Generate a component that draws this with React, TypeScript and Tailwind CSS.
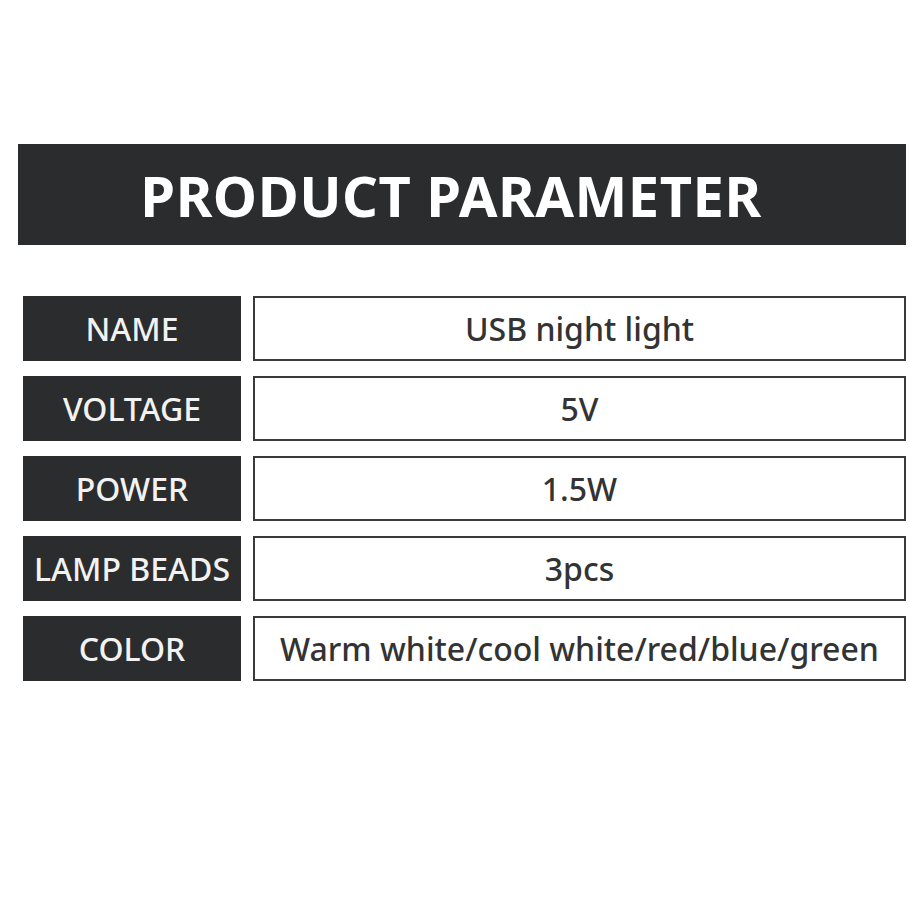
const rows = [
  { label: "NAME", value: "USB night light" },
  { label: "VOLTAGE", value: "5V" },
  { label: "POWER", value: "1.5W" },
  { label: "LAMP BEADS", value: "3pcs" },
  { label: "COLOR", value: "Warm white/cool white/red/blue/green" },
];

export default function App() {
  return (
    <div className="w-[920px] h-[920px] bg-white font-['Noto_Sans',sans-serif] pt-[144px]">
      <div className="ml-[18px] w-[888px] h-[101px] bg-[#2b2c2d] flex items-center justify-center pr-[22px]">
        <h1 className="text-[56px] font-bold text-white tracking-[0.5px] leading-none">
          PRODUCT PARAMETER
        </h1>
      </div>
      <div className="mt-[51px] ml-[23px] w-[883px] flex flex-col gap-[15px]">
        {rows.map((row) => (
          <div key={row.label} className="flex h-[65px] gap-[12px]">
            <div className="w-[218px] bg-[#2b2c2d] flex items-center justify-center text-[#f2f2f2] text-[32px] font-medium whitespace-nowrap">
              {row.label}
            </div>
            <div className="flex-1 border-2 border-[#3a3a3a] flex items-center justify-center text-[#333] text-[32px] font-medium whitespace-nowrap">
              {row.value}
            </div>
          </div>
        ))}
      </div>
    </div>
  );
}
